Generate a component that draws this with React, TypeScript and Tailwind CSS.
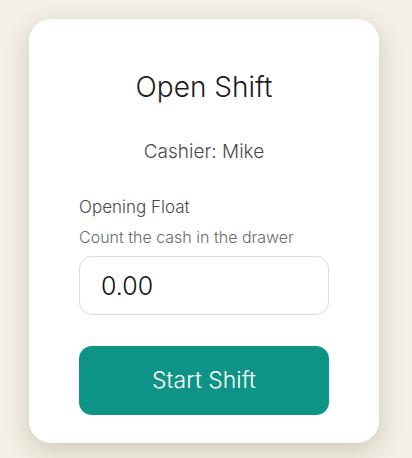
export default function App() {
  return (
    <div className="flex min-h-screen items-center justify-center bg-[#f3efe5] pr-[4px] pt-[4px] font-['Inter','Noto_Sans',sans-serif]">
      <div className="flex w-[350px] flex-col rounded-[22px] bg-white px-[50px] pb-[28px] pt-[48px] shadow-[0_8px_24px_rgba(90,75,40,0.22)]">
        <h1 className="text-center text-[28px] leading-[40px] font-light text-[#1c1c1c]">Open Shift</h1>
        <p className="mt-[31px] text-center text-[19px] leading-[28px] font-light text-[#4a4a4a]">Cashier: Mike</p>

        <label className="mt-[29px] text-[17px] leading-[24px] font-light text-[#4a4a4a]">Opening Float</label>
        <p className="mt-[7px] text-[16px] leading-[22px] font-light text-[#6a6a6a]">Count the cash in the drawer</p>
        <input
          className="mt-[8px] h-[59px] w-full rounded-[13px] border border-[#dcdcdc] px-[21px] text-[25px] font-light text-[#111] outline-none"
          defaultValue="0.00"
        />

        <button className="mt-[31px] h-[69px] w-full rounded-[13px] bg-[#0e9486] text-[23px] font-light text-white">
          Start Shift
        </button>
      </div>
    </div>
  );
}
